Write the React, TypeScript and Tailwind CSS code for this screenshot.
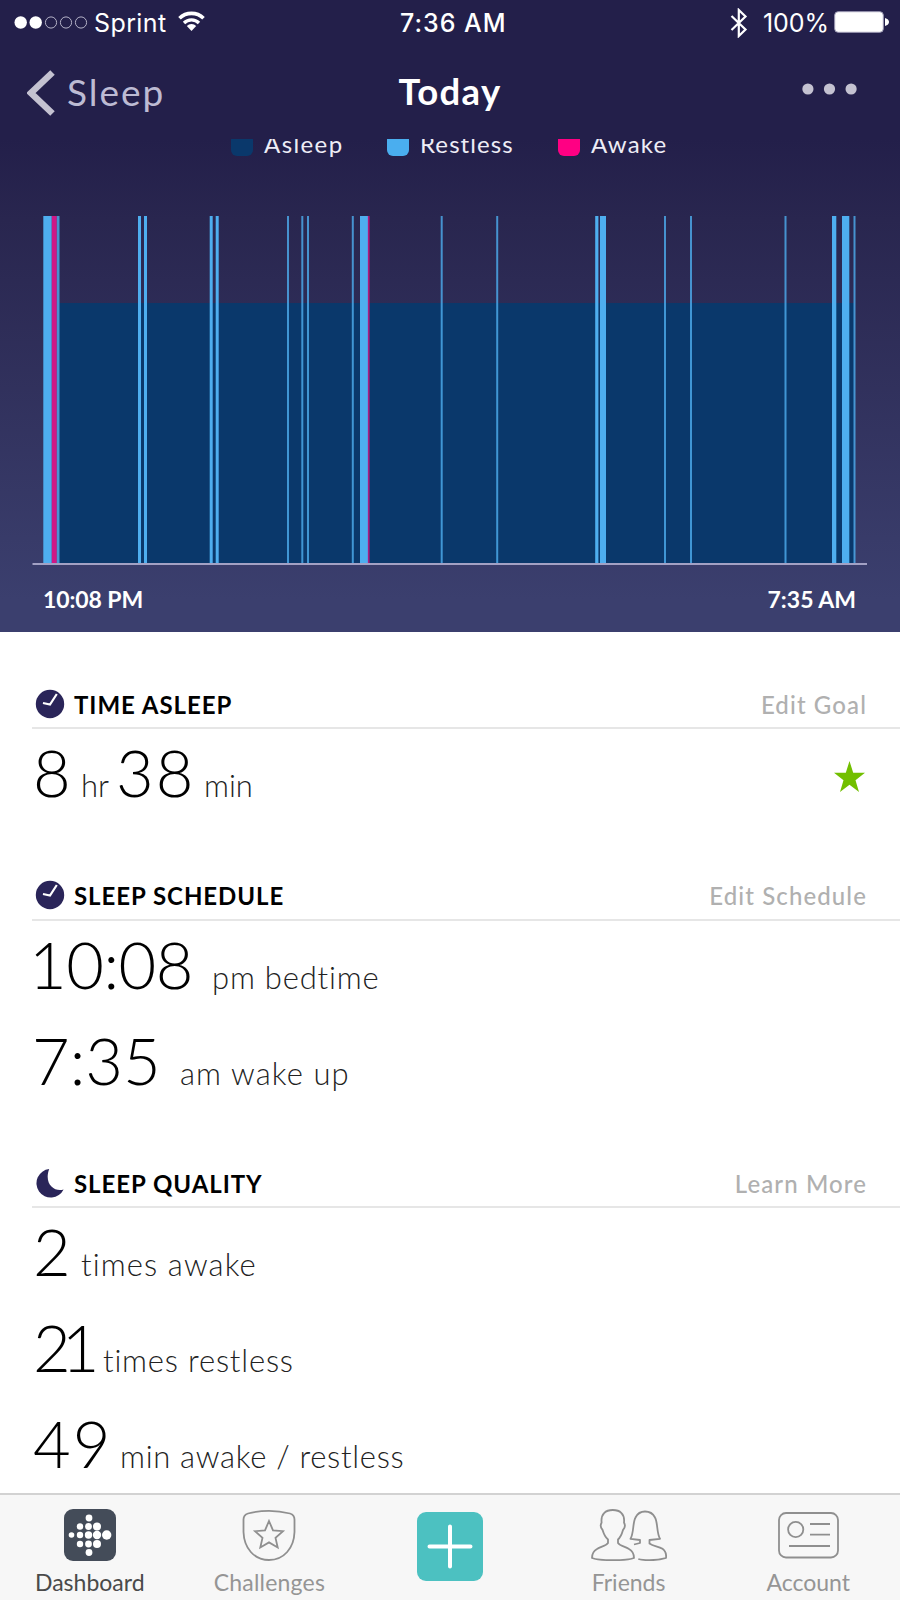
import { ReactNode } from "react";

type Bar = { x: number; w: number; kind: "restless" | "awake"; dim?: boolean };

const bars: Bar[] = [
  { x: 43.3, w: 8.5, kind: "restless" },
  { x: 51.8, w: 5, kind: "awake" },
  { x: 56.8, w: 2.7, kind: "restless", dim: true },
  { x: 138, w: 3, kind: "restless" },
  { x: 144, w: 3, kind: "restless" },
  { x: 209.7, w: 3, kind: "restless" },
  { x: 215.7, w: 3, kind: "restless" },
  { x: 287, w: 2, kind: "restless", dim: true },
  { x: 301.3, w: 2, kind: "restless", dim: true },
  { x: 307, w: 2, kind: "restless", dim: true },
  { x: 351.8, w: 2, kind: "restless", dim: true },
  { x: 360, w: 8, kind: "restless" },
  { x: 367.8, w: 1.8, kind: "awake", dim: true },
  { x: 440.7, w: 2, kind: "restless", dim: true },
  { x: 496.2, w: 2, kind: "restless", dim: true },
  { x: 595.2, w: 3.2, kind: "restless" },
  { x: 600, w: 6, kind: "restless" },
  { x: 664, w: 2, kind: "restless", dim: true },
  { x: 690, w: 2, kind: "restless", dim: true },
  { x: 784.5, w: 2, kind: "restless", dim: true },
  { x: 832, w: 4.3, kind: "restless" },
  { x: 842, w: 7.3, kind: "restless" },
  { x: 853.5, w: 2, kind: "restless", dim: true },
];

const StatusBar = () => {
  return (
    <div className="flex h-[46px] w-full items-center font-['Inter',sans-serif] text-[25px] leading-none text-white">
      <div className="flex w-[400px] items-center">
        <svg className="ml-[14px] h-[14px] w-[76px]" viewBox="0 0 76 14">
          <circle cx="6.7" cy="6.5" r="6.2" fill="#fff" />
          <circle cx="21.7" cy="6.5" r="6.2" fill="#fff" />
          <circle cx="37" cy="6.5" r="5.6" fill="none" stroke="#b5b3c8" />
          <circle cx="52" cy="6.5" r="5.6" fill="none" stroke="#b5b3c8" />
          <circle cx="67" cy="6.5" r="5.6" fill="none" stroke="#b5b3c8" />
        </svg>
        <span className="ml-[4px] w-[84px] tracking-[0.4px]">Sprint</span>
        <svg className="mb-[4px] h-[20px] w-[27px]" viewBox="0 0 27 20">
          <path d="M1.5 7.3a17 17 0 0 1 24 0" fill="none" stroke="#fff" strokeWidth="3.6" />
          <path d="M6 12a10.6 10.6 0 0 1 15 0" fill="none" stroke="#fff" strokeWidth="3.3" />
          <path d="M13.5 20l-4.7-5a6.5 6.5 0 0 1 9.4 0z" fill="#fff" />
        </svg>
      </div>
      <span className="w-[112px] whitespace-nowrap font-medium tracking-[1px]">7:36 AM</span>
      <div className="ml-auto flex items-center">
        <svg className="h-[30px] w-[18px]" viewBox="0 0 18 30">
          <path d="M1.5 8l14 13.5L8.8 28V2l6.7 6.5L1.5 22" fill="none" stroke="#fff" strokeWidth="2.2" />
        </svg>
        <span className="ml-[15px] w-[71px] whitespace-nowrap tracking-[-0.1px]">100%</span>
        <svg className="mb-[2px] mr-[11px] h-[22px] w-[55px]" viewBox="0 0 55 22">
          <rect x="0.7" y="0.7" width="48.6" height="20.6" rx="3.5" fill="#fff" stroke="#9e9cb5" />
          <path d="M51 7c2.6.6 4 2.3 4 4s-1.4 3.4-4 4z" fill="#fff" />
        </svg>
      </div>
    </div>
  );
};

const NavBar = () => {
  return (
    <div className="grid h-[93px] w-full grid-cols-3 items-center leading-none text-white">
      <div className="flex items-center text-[37px] text-[#bdbbd3]">
        <svg className="ml-[27px] h-[46px] w-[28px]" viewBox="0 0 28 46">
          <path d="M25.5 2.5L4 23l21.5 20.5" fill="none" stroke="#c4c2d1" strokeWidth="6.5" />
        </svg>
        <span className="mb-[2px] ml-[12px] tracking-[2px]">Sleep</span>
      </div>
      <span className="mb-[3px] text-center text-[36.5px] font-bold tracking-[1.3px]">Today</span>
      <svg className="mb-[7px] ml-auto mr-[42px] h-[12px] w-[56px]" viewBox="0 0 56 12">
        <circle cx="5.9" cy="6" r="5.6" fill="#c4c2d1" />
        <circle cx="27.5" cy="6" r="5.6" fill="#c4c2d1" />
        <circle cx="49.1" cy="6" r="5.6" fill="#c4c2d1" />
      </svg>
    </div>
  );
};

// The legend has scrolled half way under the nav bar, so its top is cut off
const Legend = () => {
  return (
    <div className="h-[30px] overflow-hidden text-[24px] leading-[30px] text-[#eeedf6]">
      <div className="-mt-[12px] flex pl-[231px]">
        <div className="flex h-[34px] w-[156px] shrink-0 items-center">
          <i className="mr-[11px] mt-[2px] h-[22px] w-[22px] rounded-[6px] bg-[#0a386b]" />
          <span className="tracking-[1.4px]">Asleep</span>
        </div>
        <div className="flex h-[34px] w-[171px] shrink-0 items-center">
          <i className="mr-[11px] mt-[2px] h-[22px] w-[22px] rounded-[6px] bg-[#4aaeef]" />
          <span className="tracking-[1.1px]">Restless</span>
        </div>
        <div className="flex h-[34px] shrink-0 items-center">
          <i className="mr-[11px] mt-[2px] h-[22px] w-[22px] rounded-[6px] bg-[#ff0083]" />
          <span className="tracking-[1.2px]">Awake</span>
        </div>
      </div>
    </div>
  );
};

const SleepChart = () => {
  return (
    <svg className="mt-[47px] block h-[350px] w-[900px]" viewBox="0 216 900 350">
      <rect x="59" y="303" width="795" height="260" fill="#0a386b" />
      {bars.map((bar) => (
        <rect
          key={bar.x}
          x={bar.x}
          y="216"
          width={bar.w}
          height="347"
          fill={bar.kind === "awake" ? "#cf1886" : "#4eaeef"}
          opacity={bar.dim ? 0.8 : 1}
        />
      ))}
      <rect x="32.5" y="563" width="834.5" height="2" fill="#a3a1c4" />
    </svg>
  );
};

const ClockIcon = () => (
  <svg className="h-[30px] w-[30px]" viewBox="0 0 30 30">
    <circle cx="15" cy="15" r="14.2" fill="#2a2559" />
    <path d="M8 14l7 1.6L21.8 5" fill="none" stroke="#fff" strokeWidth="2.2" />
  </svg>
);

const MoonIcon = () => (
  <svg className="h-[30px] w-[30px]" viewBox="0 0 30 30">
    <path d="M14.2 1A14.3 14.3 0 1 0 28.6 21.5C20 24.5 8.5 16.5 14.2 1z" fill="#2a2559" />
  </svg>
);

const Section = ({
  icon,
  title,
  action,
  children,
}: {
  icon: ReactNode;
  title: string;
  action: ReactNode;
  children: ReactNode;
}) => {
  return (
    <section className="mb-[46.5px] pl-[32px]">
      <div className="flex h-[49px] items-center border-b-2 border-[#e6e6e6] pl-[3px] pr-[33px] text-[24px] leading-none">
        {icon}
        <h2 className="ml-[9px] mt-[2px] font-bold tracking-[0.95px] text-black">{title}</h2>
        <span className="ml-auto mt-[2px] font-medium tracking-[1.1px] text-[#b0b0b0]">{action}</span>
      </div>
      {children}
    </section>
  );
};

const Row = ({ children }: { children: ReactNode }) => (
  <div className="flex h-[96px] items-baseline whitespace-nowrap text-[31px] font-light leading-[87px] tracking-[0.8px] text-[#222] [font-variant-ligatures:none]">
    {children}
  </div>
);

const TabBar = () => {
  return (
    <nav className="grid h-[107px] shrink-0 grid-cols-5 border-t-2 border-[#d2d2d2] bg-[#f7f7f7] pr-[2px] text-[23px] leading-none text-[#959595]">
      <div className="flex flex-col items-center text-[#4a4a4a]">
        <svg className="mt-[14px] h-[52px] w-[52px]" viewBox="0 0 52 52">
          <rect width="52" height="52" rx="9" fill="#444c59" />
          <g fill="#fff">
            <circle cx="25" cy="9" r="3.4" />
            <circle cx="16" cy="17.5" r="3.2" />
            <circle cx="24.5" cy="17.5" r="3.4" />
            <circle cx="33" cy="17.5" r="4" />
            <circle cx="7.5" cy="26" r="2.8" />
            <circle cx="16" cy="26" r="3.2" />
            <circle cx="24.5" cy="26" r="3.7" />
            <circle cx="33" cy="26" r="4.2" />
            <circle cx="42.7" cy="26" r="4.7" />
            <circle cx="16" cy="35" r="3.2" />
            <circle cx="24.5" cy="35" r="3.4" />
            <circle cx="33" cy="35" r="4" />
            <circle cx="25" cy="43.5" r="3.4" />
          </g>
        </svg>
        <span className="mt-[10px]">Dashboard</span>
      </div>
      <div className="flex flex-col items-center">
        <svg className="mt-[14px] h-[52px] w-[54px]" viewBox="0 0 54 52" fill="none" stroke="#8f8f8f" strokeWidth="1.8">
          <path d="M6 4.5Q27-.8 48 4.500 52.500 6 52.500 10.500V23C52 39 42 51 27 51S2 39 1.500 23V10.500Q1.500 6 6 4.500z" />
          <path d="M27 12l4 9.300 10 .9-7.500 6.700 2.200 9.600L27 33.400l-8.700 5.100 2.200-9.600L13 22.200l10-.9z" />
        </svg>
        <span className="mt-[10px] tracking-[0.2px]">Challenges</span>
      </div>
      <div className="flex justify-center">
        <svg className="ml-[2px] mt-[17px] h-[69px] w-[66px]" viewBox="0 0 66 69">
          <rect width="66" height="69" rx="9" fill="#4cc1c1" />
          <path d="M12.5 34.500h41M33 14.500v40" stroke="#fff" strokeWidth="4" strokeLinecap="round" />
        </svg>
      </div>
      <div className="flex flex-col items-center">
        <svg
          className="mt-[14px] h-[52px] w-[77px]"
          viewBox="0 0 77 52"
          fill="none"
          stroke="#8f8f8f"
          strokeWidth="1.8"
          strokeLinejoin="round"
        >
          <path d="M18 30.500v3.500c-2 3-7 3.500-11 6-4 2.300-5 5.500-5 9 5 2 12 2.200 21 2.200s16-.2 21-2.200c0-3.500-1-6.700-5-9-4-2.500-9-3-11-6v-3.500c3-2.500 4-6 5-9.500 2-2 2.300-5 1-7.500C35 5 30 1 22.800 1S10.600 5 11.600 13.500c-1.300 2.500-1 5.500 1 7.500 1 3.500 2.400 7 5.400 9.500z" />
          <path d="M44 35.500l6-1.500v-3l-9.500-1.200C44 24 42.500 14 45.500 8.500 48 3.500 51 2.500 55 2.500s7.500 1 10 6c3 5.500 1.500 15.500 5 21.300L59.500 31v3.500c4 3 9 2.500 13 5.300 3 2.200 4 5.500 3.500 9.200-5 1.500-10 2.200-16.500 2.200-4 0-8-.2-11.200-1.200" />
        </svg>
        <span className="mt-[10px]">Friends</span>
      </div>
      <div className="flex flex-col items-center">
        <svg className="mt-[14px] h-[52px] w-[61px]" viewBox="0 0 61 52" fill="none" stroke="#8f8f8f" strokeWidth="1.8">
          <rect x="1" y="4" width="59" height="44.5" rx="7" />
          <circle cx="17.7" cy="20.5" r="7.6" />
          <path d="M32 15h20M32 25.700h20M11 37h41" />
        </svg>
        <span className="mt-[10px]">Account</span>
      </div>
    </nav>
  );
};

const App = () => {
  return (
    <div className="flex h-[1600px] w-[900px] flex-col overflow-hidden bg-white font-['Lato',sans-serif]">
      <header className="h-[632px] shrink-0 bg-[linear-gradient(#231f4a_0px,#231f4a_139px,#29264f_220px,#3b3f6e_600px,#3b3f6e_632px)]">
        <StatusBar />
        <NavBar />
        <Legend />
        <SleepChart />
        <div className="flex justify-between pl-[43px] pr-[44px] pt-[19px] text-[23px] font-bold leading-[28px] text-white">
          <span className="tracking-[-0.1px]">10:08 PM</span>
          <span>7:35 AM</span>
        </div>
      </header>

      <main className="min-h-0 flex-1 overflow-hidden pt-[48px]">
        <Section icon={<ClockIcon />} title="TIME ASLEEP" action="Edit Goal">
          <Row>
            <span className="w-[49px] pl-px text-[65px] text-black">8</span>
            <span className="w-[35px] tracking-normal">hr</span>
            <span className="w-[88px] text-[65px] tracking-[2px] text-black">38</span>
            <span className="tracking-normal">min</span>
            <svg className="ml-auto mr-[35px] h-[32px] w-[31px] self-center" viewBox="0 0 31 32">
              <path d="M15.500 0l3.700 11.700H31l-9.500 7.500L25 31l-9.500-7.200L6 31l3.500-11.800L0 11.700h11.800z" fill="#72bf00" />
            </svg>
          </Row>
        </Section>

        <Section icon={<ClockIcon />} title="SLEEP SCHEDULE" action="Edit Schedule">
          <Row>
            <span className="-ml-[3px] w-[183px] text-[65px] tracking-[-0.5px] text-black">10:08</span>
            <span>pm bedtime</span>
          </Row>
          <Row>
            <span className="w-[148px] text-[65px] tracking-normal text-black">7:35</span>
            <span className="tracking-[1.1px]">am wake up</span>
          </Row>
        </Section>

        <Section icon={<MoonIcon />} title="SLEEP QUALITY" action="Learn More">
          <Row>
            <span className="w-[49px] pl-px text-[65px] text-black">2</span>
            <span className="tracking-[1.1px]">times awake</span>
          </Row>
          <Row>
            <span className="w-[71px] pl-px text-[65px] tracking-[-9px] text-black">21</span>
            <span>times restless</span>
          </Row>
          <Row>
            <span className="w-[88px] pl-px text-[65px] tracking-[2px] text-black">49</span>
            <span className="tracking-[0.7px]">min awake / restless</span>
          </Row>
        </Section>
      </main>

      <TabBar />
    </div>
  );
};

export default App;
